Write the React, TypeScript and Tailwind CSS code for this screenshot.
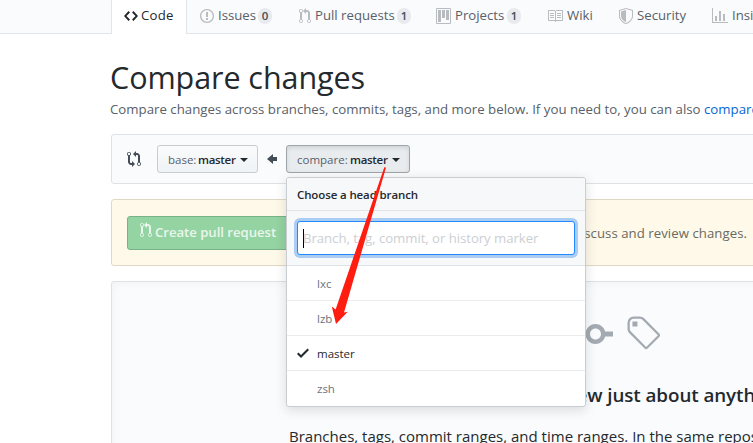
import React from 'react';

const PR =
  'M11 11.28V5c-.03-.78-.34-1.47-.94-2.06C9.46 2.35 8.78 2.03 8 2H7V0L4 3l3 3V4h1c.27.02.48.11.69.31.21.2.3.42.31.69v6.28A1.993 1.993 0 0010 15a1.993 1.993 0 001-3.72zm-1 2.92c-.66 0-1.2-.55-1.2-1.2 0-.65.55-1.2 1.2-1.2.65 0 1.2.55 1.2 1.2 0 .65-.55 1.2-1.2 1.2zM4 3c0-1.11-.89-2-2-2a1.993 1.993 0 00-1 3.72v6.56A1.993 1.993 0 002 15a1.993 1.993 0 001-3.72V4.72c.59-.34 1-.98 1-1.72zm-.8 10c0 .66-.55 1.2-1.2 1.2-.65 0-1.2-.55-1.2-1.2 0-.65.55-1.2 1.2-1.2.65 0 1.2.55 1.2 1.2zM2 4.2C1.34 4.2.8 3.65.8 3c0-.65.55-1.2 1.2-1.2.65 0 1.2.55 1.2 1.2 0 .65-.55 1.2-1.2 1.2z';
const CODE =
  'M9.5 3L8 4.5 11.5 8 8 11.5 9.5 13 14 8 9.5 3zm-5 0L0 8l4.5 5L6 11.5 2.5 8 6 4.5 4.5 3z';
const ISSUE =
  'M7 2.3c3.14 0 5.7 2.56 5.7 5.7s-2.56 5.7-5.7 5.7A5.71 5.71 0 011.3 8c0-3.14 2.56-5.7 5.7-5.7zM7 1C3.14 1 0 4.14 0 8s3.14 7 7 7 7-3.14 7-7-3.14-7-7-7zm1 3H6v5h2V4zm0 6H6v2h2v-2z';
const PROJECT =
  'M10 12h3V2h-3v10zm-4-2h3V2H6v8zm-4 4h3V2H2v12zm-1 1h13V1H1v14zM14 0H1a1 1 0 00-1 1v14a1 1 0 001 1h13a1 1 0 001-1V1a1 1 0 00-1-1z';
const BOOK =
  'M3 5h4v1H3V5zm0 3h4V7H3v1zm0 2h4V9H3v1zm11-5h-4v1h4V5zm0 2h-4v1h4V7zm0 2h-4v1h4V9zm2-6v9c0 .55-.45 1-1 1H9.5l-1 1-1-1H2c-.55 0-1-.45-1-1V3c0-.55.45-1 1-1h5.5l1 1 1-1H15c.55 0 1 .45 1 1zm-8 .5L7.5 3H2v9h6V3.5zm7-.5H9.5l-.5.5V12h6V3z';
const SHIELD =
  'M0 2l7-2 7 2v6.02C14 12.69 8.69 16 7 16c-1.69 0-7-3.31-7-7.98V2zm1 .75L7 1l6 1.75v5.268C13 12.104 8.449 15 7 15c-1.449 0-6-2.896-6-6.982V2.75zm1 .75L7 2v12c-1.207 0-5-2.482-5-5.985V3.5z';
const GRAPH = 'M16 14v1H0V0h1v14h15zM5 13H3V8h2v5zm4 0H7V3h2v10zm4 0h-2V6h2v7z';
const COMPARE =
  'M5 12H4c-.27-.02-.48-.11-.69-.31-.21-.2-.3-.42-.31-.69V4.72A1.993 1.993 0 002 1a1.993 1.993 0 00-1 3.72V11c.03.78.34 1.47.94 2.06.6.59 1.28.91 2.06.94h1v2l3-3-3-3v2zM2 1.8c.66 0 1.2.55 1.2 1.2 0 .65-.55 1.2-1.2 1.2C1.35 4.2.8 3.65.8 3c0-.65.55-1.2 1.2-1.2zm11 9.48V5c-.03-.78-.34-1.47-.94-2.06-.6-.59-1.28-.91-2.06-.94H9V0L6 3l3 3V4h1c.27.02.48.11.69.31.21.2.3.42.31.69v6.28A1.993 1.993 0 0012 15a1.993 1.993 0 001-3.72zm-1 2.92c-.66 0-1.2-.55-1.2-1.2 0-.65.55-1.2 1.2-1.2.65 0 1.2.55 1.2 1.2 0 .65-.55 1.2-1.2 1.2z';
const LEFT = 'M6 3L0 8l6 5v-3h4V6H6V3z';
const CHECK = 'M12 5l-8 8-4-4 1.5-1.5L4 10l6.5-6.5L12 5z';
const TAG =
  'M7.685 1.72a2.49 2.49 0 00-1.76-.726H3.48A2.5 2.5 0 00.994 3.48v2.456c0 .656.269 1.292.726 1.76l6.024 6.024a.99.99 0 001.402 0l4.563-4.563a.99.99 0 000-1.402L7.685 1.72zM2.366 7.048A1.54 1.54 0 011.9 5.925V3.48c0-.874.716-1.58 1.58-1.58h2.456c.418 0 .825.159 1.123.467l6.104 6.094-4.702 4.702-6.094-6.114zm.626-4.066h1.989v1.989H2.982V2.982h.01z';
const COMMIT =
  'M10.86 7c-.45-1.72-2-3-3.86-3-1.86 0-3.41 1.28-3.86 3H0v2h3.14c.45 1.72 2 3 3.86 3 1.86 0 3.41-1.28 3.86-3H14V7h-3.14zM7 10.2c-1.22 0-2.2-.98-2.2-2.2 0-1.22.98-2.2 2.2-2.2 1.22 0 2.2.98 2.2 2.2 0 1.22-.98 2.2-2.2 2.2z';

function Octicon({ d, w, size = 16, className = '' }: { d: string; w: number; size?: number; className?: string }) {
  return (
    <svg
      viewBox={`0 0 ${w} 16`}
      width={(w * size) / 16}
      height={size}
      fill="currentColor"
      fillRule="evenodd"
      className={`shrink-0 ${className}`}
    >
      <path d={d} />
    </svg>
  );
}

function Tab({ d, w, label, count, width, textWidth }: { d: string; w: number; label: string; count?: number; width: string; textWidth: string }) {
  return (
    <div className={`flex h-[31px] shrink-0 items-center text-[#586069] ${width}`}>
      <Octicon d={d} w={w} className="mr-1 text-[#b8bbbf]" />
      <span className={`shrink-0 ${textWidth}`}>{label}</span>
      {count !== undefined && (
        <span className="flex h-[16px] min-w-[14px] items-center justify-center rounded-full bg-[#e8eaed] px-[3.5px] text-[11.5px] font-semibold leading-none text-[#444d56]">
          {count}
        </span>
      )}
    </div>
  );
}

function Caret() {
  return <span className="ml-[4px] border-x-4 border-t-4 border-x-transparent border-t-[#24292e]" />;
}

const branches = ['lxc', 'lzb', 'master', 'zsh'];

export default function App() {
  return (
    <div className="relative h-[443px] w-[753px] overflow-hidden bg-white font-['Open_Sans','Noto_Sans',sans-serif] text-[13.2px] text-[#24292e]">
      <nav className="flex h-[34px] border-b border-[#e1e4e8] bg-[#fafbfc] pl-[111px]">
        <div className="flex h-[34px] w-[76px] shrink-0 border-x border-[#e1e4e8] bg-white pl-3">
          <div className="flex h-[31px] items-center">
            <Octicon d={CODE} w={14} className="mr-[3px]" />
            <span className="tracking-[0.25px]">Code</span>
          </div>
        </div>
        <div className="flex pl-[13px]">
          <Tab d={ISSUE} w={14} label="Issues" count={0} width="w-[99px]" textWidth="w-[40px]" />
          <Tab d={PR} w={12} label="Pull requests" count={1} width="w-[137px]" textWidth="w-[82px]" />
          <Tab d={PROJECT} w={15} label="Projects" count={1} width="w-[111px]" textWidth="w-[52px]" />
          <Tab d={BOOK} w={16} label="Wiki" width="w-[72px]" textWidth="w-[28px]" />
          <Tab d={SHIELD} w={14} label="Security" width="w-[93px]" textWidth="w-[50px]" />
          <Tab d={GRAPH} w={16} label="Insights" width="w-[80px]" textWidth="w-[52px]" />
        </div>
      </nav>

      <main className="ml-[111px] w-[980px]">
        <h1 className="-ml-px pt-[23px] text-[30.5px] leading-[40px] tracking-[-0.07px]">Compare changes</h1>
        <p className="-ml-px mt-[2px] whitespace-nowrap text-[13.25px] leading-[20px] text-[#586069]">
          Compare changes across branches, commits, tags, and more below. If you need to, you can also{' '}
          <span className="text-[#0366d6]">compare across forks</span>.
        </p>

        <section className="mt-[15px] flex h-[50px] items-center rounded-[3px] border border-[#dfe2e5] bg-[#fafbfc] pl-[15px] text-[11.5px]">
          <Octicon d={COMPARE} w={14} className="text-[#444d56]" />
          <button className="ml-4 flex h-[28px] w-[101px] items-center rounded-[3px] border border-[#c9ccd0] bg-linear-to-b from-[#fafbfc] to-[#eff3f6] pl-[10px] pt-px">
            <span className="w-[30px] text-left text-[#586069]">base:</span>
            <span className="font-semibold tracking-[-0.3px]">master</span>
            <Caret />
          </button>
          <Octicon d={LEFT} w={10} className="ml-[9px] text-[#444d56]" />
          <button className="ml-[9px] flex h-[28px] w-[124px] items-center rounded-[3px] border border-[#9fa4a9] bg-[#e9ecef] pl-[10px] pt-px shadow-[inset_0_2px_4px_rgba(27,31,35,0.12)]">
            <span className="w-[53px] text-left text-[#586069]">compare:</span>
            <span className="font-semibold tracking-[-0.3px]">master</span>
            <Caret />
          </button>
        </section>

        <section className="mt-[15px] flex h-[67px] items-center rounded-[3px] border border-[#dfd8c2] bg-[#fff9ea] pl-[15px]">
          <button className="flex h-[34px] w-[165px] items-center rounded-[3px] border border-[#78b288] bg-[#94d3a2] pl-3 font-semibold text-[#eaf6ec]">
            <Octicon d={PR} w={12} className="-mt-[5px] mr-[3px]" />
            <span className="tracking-[-0.05px]">Create pull request</span>
          </button>
          <p className="ml-[110px] w-[345px] whitespace-nowrap pt-[2px] text-right tracking-[0.05px] text-[#6a6a62]">discuss and review changes.</p>
        </section>

        <section className="mt-[15px] flex h-[220px] flex-col items-center rounded-t-[3px] border border-[#dfe2e5] bg-[#fafbfc] pt-[32px] shadow-[inset_0_0_10px_rgba(27,31,35,0.05)]">
          <div className="flex h-10 w-[118px] justify-between pl-1 text-[#a3aab1]">
            <Octicon d={COMMIT} w={14} size={40} className="ml-[32px]" />
            <Octicon d={TAG} w={14} size={40} />
          </div>
          <h3 className="mt-[26px] whitespace-nowrap pr-[3px] text-[18.8px] font-semibold leading-[30px] tracking-[-0.07px]">
            Compare and review just about anything
          </h3>
          <p className="mt-[14px] w-[624px] whitespace-nowrap text-[15px] leading-[24px]">
            Branches, tags, commit ranges, and time ranges. In the same repository and across forks.
          </p>
        </section>
      </main>

      <div className="absolute left-[286px] top-[177px] w-[300px] overflow-hidden rounded-[3px] border border-[#c9ccd0] bg-white text-[11.5px] shadow-[0_3px_12px_rgba(27,31,35,0.15)]">
        <div className="flex h-[33px] items-center border-b border-[#e1e4e8] bg-[#f6f8fa] pl-[10px] pt-[2px] font-semibold tracking-[-0.12px]">
          Choose a head branch
        </div>
        <div className="h-[55px] border-b border-[#dfe2e5] bg-[#f6f8fa] px-[10px] pt-[10px]">
          <div className="flex h-[34px] items-center rounded-[3px] border border-[#2188ff] bg-white pl-[5px] text-[13.2px] text-[#cbcfd3] shadow-[0_0_0_3px_#abcdf3]">
            <span className="-mr-px h-[19px] w-px bg-black" />
            <span className="pt-px tracking-[-0.05px]">Branch, tag, commit, or history marker</span>
          </div>
        </div>
        {branches.map((name, i) => (
          <div
            key={name}
            className={`flex h-[35px] items-center pl-[10px] ${i < 3 ? 'border-b border-[#eaecef]' : 'pb-px'} ${
              name === 'master' ? 'text-[#24292e]' : 'text-[#6a737d]'
            }`}
          >
            <span className="w-[20px]">{name === 'master' && <Octicon d={CHECK} w={12} className="text-[#24292e]" />}</span>
            <span className="pt-[2px]">{name}</span>
          </div>
        ))}
      </div>

      <svg className="absolute left-0 top-0" width="753" height="443">
        <path d="M384.3 167.2L386 167.6L344 312.5L347.8 311.7L336 324L331.8 306.5L335.6 309.5Z" fill="#ff1c10" />
      </svg>
    </div>
  );
}
